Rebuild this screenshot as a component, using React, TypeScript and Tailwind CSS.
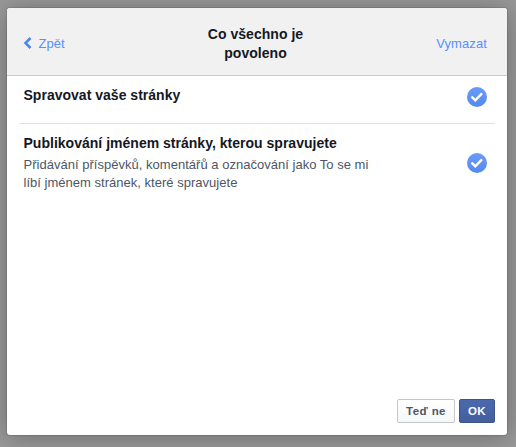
type PermissionItem = { title: string; description?: string };

const permissions: PermissionItem[] = [
  { title: "Spravovat vaše stránky" },
  {
    title: "Publikování jménem stránky, kterou spravujete",
    description:
      "Přidávání příspěvků, komentářů a označování jako To se mi líbí jménem stránek, které spravujete",
  },
];

function CheckBadge() {
  return (
    <svg width="20" height="20" viewBox="0 0 20 20" className="shrink-0">
      <defs>
        <linearGradient id="badge" x1="0" y1="0" x2="0" y2="1">
          <stop offset="0" stopColor="#6a9bf8" />
          <stop offset="1" stopColor="#5489ee" />
        </linearGradient>
      </defs>
      <circle cx="10" cy="10" r="10" fill="url(#badge)" />
      <path
        d="M5.3 10.4 8.3 13.3 14.3 7.2"
        fill="none"
        stroke="#fff"
        strokeWidth="2.5"
        strokeLinecap="round"
      />
    </svg>
  );
}

function PermissionRow({ title, description }: PermissionItem) {
  return (
    <li className="flex items-center justify-between border-b border-[#e0e1e3] pt-[9px] pr-2 pb-[14px] pl-[4.5px] last:border-b-0">
      <div className="min-h-6 w-[360px]">
        <h3 className="text-[14px] leading-5 font-bold tracking-[0.015px] text-[#141823]">{title}</h3>
        {description && (
          <p className="mt-[3px] pb-px text-[13px] leading-[18px] tracking-[0.02px] text-[#4e5665]">
            {description}
          </p>
        )}
      </div>
      <CheckBadge />
    </li>
  );
}

export default function App() {
  return (
    <div className="h-[447px] w-[516px] overflow-hidden bg-[#999] pt-2 pl-[7px] font-['Liberation_Sans',Arial,sans-serif]">
      <main className="flex h-[427px] w-[500px] flex-col overflow-hidden rounded-[3px] bg-white shadow-[0_2px_26px_rgba(0,0,0,0.3),0_0_0_1px_rgba(0,0,0,0.1)]">
        <header className="grid h-[68px] shrink-0 grid-cols-[1fr_141px_1fr] items-center border-b border-[#c8c9cc] bg-[#f1f1f1] pt-[5px] pr-5 pl-[17px] text-[13px] text-[#5890ff]">
          <button className="flex items-center gap-[6.5px] text-left">
            <svg width="9" height="12" viewBox="0 0 9 12" className="-mt-0.5 -ml-px">
              <path d="M7.5 1 2.5 6l5 5" fill="none" stroke="#4e85f0" strokeWidth="2.6" />
            </svg>
            <span>Zpět</span>
          </button>
          <h1 className="text-center text-[14px] leading-[19px] font-bold tracking-[0.03px] text-[#141823]">
            Co všechno je
            <br />
            povoleno
          </h1>
          <button className="text-right tracking-[0.1px]">Vymazat</button>
        </header>
        <ul className="flex-1 px-3">
          {permissions.map((item) => (
            <PermissionRow key={item.title} {...item} />
          ))}
        </ul>
        <footer className="flex justify-end gap-1 pr-3 pb-3 text-[11.5px] leading-[22px] font-bold">
          <button className="h-6 w-[58px] rounded-[2px] border border-[#c4c6ca] bg-linear-to-b from-white to-[#f6f7f8] tracking-[0.4px] text-[#4e5665]">
            Teď ne
          </button>
          <button className="h-6 w-9 rounded-[2px] border border-[#3d5487] bg-linear-to-b from-[#4c69ae] to-[#435f9f] tracking-[0.3px] text-white">
            OK
          </button>
        </footer>
      </main>
    </div>
  );
}
